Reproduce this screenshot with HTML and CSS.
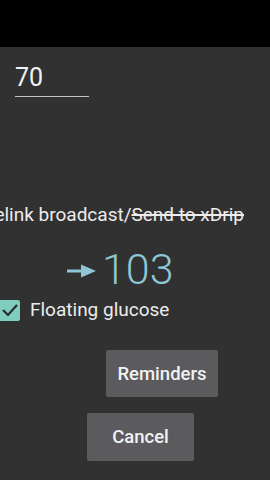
FILE: index.html
```html
<!DOCTYPE html>
<html lang="en">
<head>
    <meta charset="UTF-8">
    <meta name="viewport" content="width=device-width, initial-scale=1.0">
    <title>Settings</title>
    <link rel="stylesheet" href="styles.css">
</head>
<body>
    <div class="topbar"></div>

    <div class="content">
        <div class="field">70</div>

        <div class="broadcast">
            <span class="line">Librelink broadcast/<s>Send to xDrip</s></span>
        </div>

        <div class="glucose">
            <svg class="arrow" width="30" height="16" viewBox="0 0 30 16">
                <rect x="0" y="6.5" width="18" height="3" fill="#8ec6d6"/>
                <polygon points="14,1.5 29,8 14,14.5" fill="#8ec6d6"/>
            </svg>
            <span class="value">103</span>
        </div>

        <label class="check">
            <span class="box">
                <svg width="20" height="20" viewBox="0 0 20 20">
                    <polyline points="3,10 8,15 17,5" fill="none" stroke="#2b2b2b" stroke-width="2.2"/>
                </svg>
            </span>
            <span>Floating glucose</span>
        </label>

        <button class="btn reminders">Reminders</button>
        <button class="btn cancel">Cancel</button>
    </div>
</body>
</html>
```

FILE: styles.css
```css
* { box-sizing: border-box; margin: 0; padding: 0; }
body { width: 270px; height: 480px; overflow: hidden; background: #313131; font-family: Roboto, "Liberation Sans", sans-serif; color: #ececec; }
.topbar { height: 47px; background: #000; }
.content { display: flex; flex-direction: column; align-items: flex-start; }
.field { margin: 16px 0 0 15px; width: 74px; font-size: 25px; line-height: 30px; padding-bottom: 3px; border-bottom: 1.5px solid #c4c4c4; color: #f2f2f2; }
.broadcast { width: 270px; margin-top: 106px; display: flex; justify-content: flex-end; padding-right: 26px; overflow: hidden; }
.line { white-space: nowrap; font-size: 19px; line-height: 24px; }
.line s { text-decoration-thickness: 1.5px; }
.glucose { width: 270px; margin-top: 16px; display: flex; align-items: center; padding-left: 67px; color: #8ec6d6; }
.arrow { margin-top: 3px; margin-right: 5px; }
.value { font-size: 43px; line-height: 52px; font-weight: 300; }
.check { display: flex; align-items: center; gap: 10px; margin-top: 3px; font-size: 19px; line-height: 24px; }
.box { width: 20px; height: 21px; background: #7fcdbf; border-radius: 0 2px 2px 0; display: flex; }
.btn { border: none; border-radius: 2px; background: #5b5b5d; color: #f2f2f2; font-family: Roboto, "Liberation Sans", sans-serif; font-size: 18.5px; font-weight: 500; height: 47px; }
.reminders { margin: 28px 0 0 106px; width: 112px; }
.cancel { margin: 16px 0 0 87px; width: 107px; height: 48px; }
```
